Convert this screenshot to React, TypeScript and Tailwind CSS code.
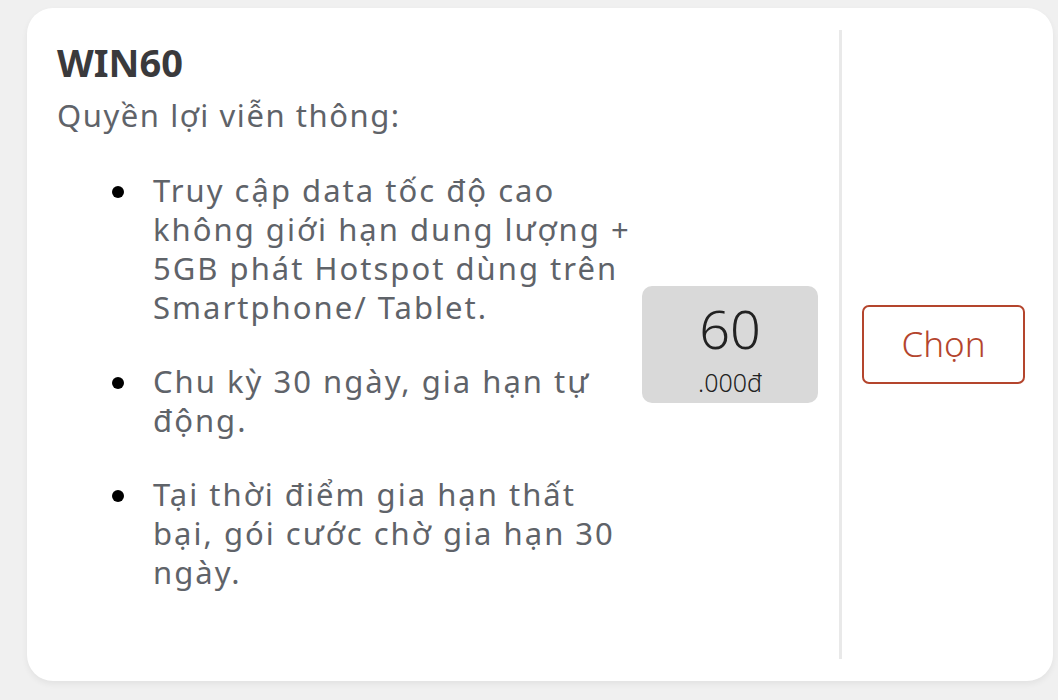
const items = [
  'Truy cập data tốc độ cao không giới hạn dung lượng + 5GB phát Hotspot dùng trên Smartphone/ Tablet.',
  'Chu kỳ 30 ngày, gia hạn tự động.',
  'Tại thời điểm gia hạn thất bại, gói cước chờ gia hạn 30 ngày.',
];

export default function App() {
  return (
    <div className="h-[700px] w-[1058px] bg-[#f0f0f0] pt-[8px] pl-[27px] font-['Noto_Sans',sans-serif]">
      <div className="flex h-[673px] w-[1026px] rounded-[26px] bg-white shadow-[0_3px_6px_rgba(0,0,0,0.06)]">
        {/* left: plan info */}
        <div className="w-[615px] pl-[30px] pt-[30px]">
          <h1 className="text-[38px] font-bold leading-[48px] text-[#3a3a3c]">WIN60</h1>
          <p className="mt-[10px] text-[31px] leading-[39px] tracking-[0.05em] text-[#5f6369]">
            Quyền lợi viễn thông:
          </p>
          <ul className="mt-[36px] flex flex-col gap-[35px]">
            {items.map((t) => (
              <li key={t} className="flex items-start">
                <span className="ml-[55px] mt-[15px] h-[12px] w-[12px] flex-shrink-0 rounded-full bg-black" />
                <span className="ml-[29px] w-[480px] text-[31px] leading-[39px] tracking-[0.065em] text-[#5f6369]">
                  {t}
                </span>
              </li>
            ))}
          </ul>
        </div>

        {/* price */}
        <div className="flex items-center">
          <div className="flex h-[117px] w-[176px] flex-col items-center justify-center rounded-[10px] bg-[#d9d9d9] pt-[6px] text-[#222]">
            <span className="text-[54px] font-light leading-[54px]">60</span>
            <span className="mt-[14px] text-[25px] font-light leading-[26px]">.000đ</span>
          </div>
        </div>

        <div className="my-[22px] ml-[21px] w-[3px] bg-[#e9e9e9]" />

        {/* action */}
        <div className="flex flex-1 items-center justify-end pr-[28px]">
          <button className="h-[79px] w-[163px] rounded-[7px] border-2 border-[#b4452d] text-[35px] font-light text-[#b4452d]">
            Chọn
          </button>
        </div>
      </div>
    </div>
  );
}
